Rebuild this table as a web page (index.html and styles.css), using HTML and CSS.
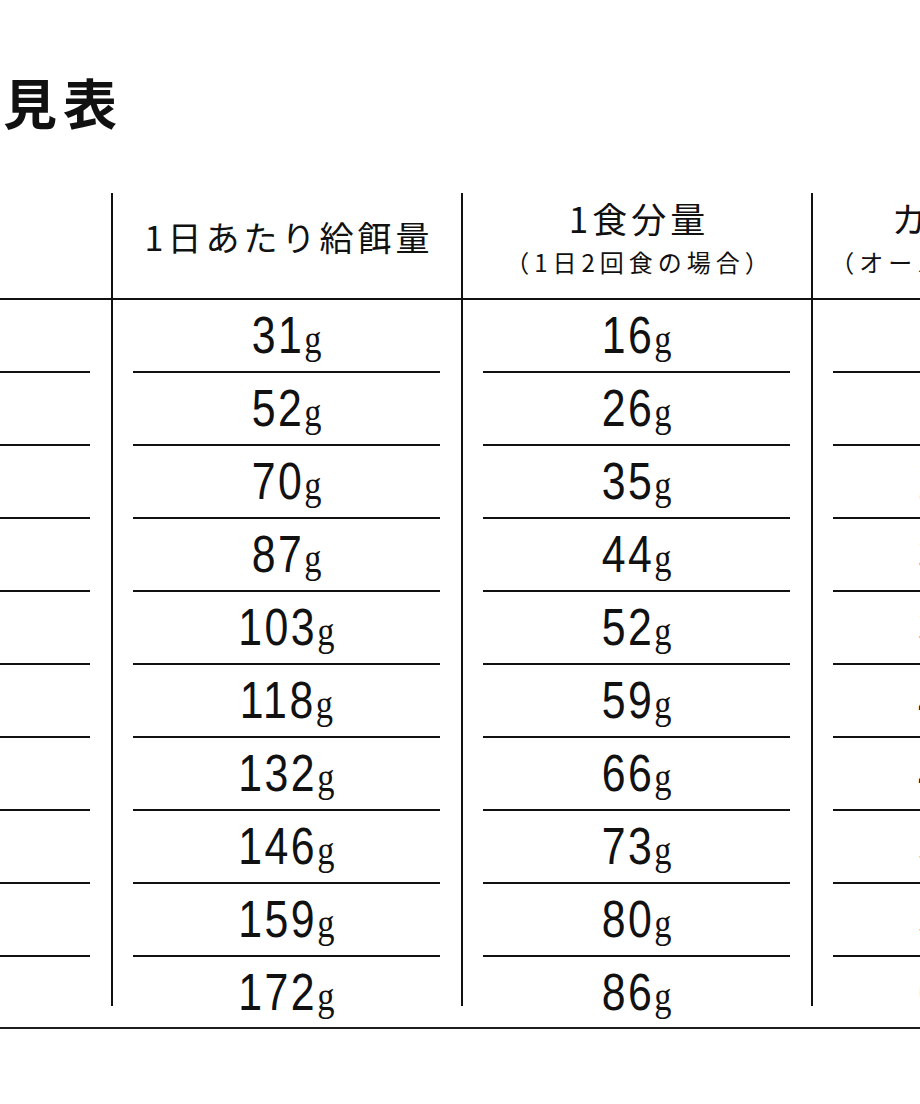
FILE: index.html
```html
<!DOCTYPE html>
<html lang="ja">
<head>
<meta charset="utf-8">
<title>給餌量早見表</title>
<link rel="stylesheet" href="styles.css">
</head>
<body>
<div class="page">
  <h1 class="title">見表</h1>
  <div class="chart">
    <div class="head">
      <div class="hcell"><span class="h-main h-lg">体重</span></div>
      <div class="hcell"><span class="h-main">1日あたり給餌量</span></div>
      <div class="hcell"><span class="h-main h-lg">1食分量</span><span class="h-sub">（1日2回食の場合）</span></div>
      <div class="hcell"><span class="h-main h-lg">カロリー量</span><span class="h-sub">（オールステージ共通）</span></div>
    </div>
    <div class="body">
      <div class="col">
        <div class="cell"><span class="v">1<span class="u">kg</span></span></div>
        <div class="cell"><span class="v">2<span class="u">kg</span></span></div>
        <div class="cell"><span class="v">3<span class="u">kg</span></span></div>
        <div class="cell"><span class="v">4<span class="u">kg</span></span></div>
        <div class="cell"><span class="v">5<span class="u">kg</span></span></div>
        <div class="cell"><span class="v">6<span class="u">kg</span></span></div>
        <div class="cell"><span class="v">7<span class="u">kg</span></span></div>
        <div class="cell"><span class="v">8<span class="u">kg</span></span></div>
        <div class="cell"><span class="v">9<span class="u">kg</span></span></div>
        <div class="cell"><span class="v">10<span class="u">kg</span></span></div>
      </div>
      <div class="col">
        <div class="cell"><span class="v">31<span class="u">g</span></span></div>
        <div class="cell"><span class="v">52<span class="u">g</span></span></div>
        <div class="cell"><span class="v">70<span class="u">g</span></span></div>
        <div class="cell"><span class="v">87<span class="u">g</span></span></div>
        <div class="cell"><span class="v">103<span class="u">g</span></span></div>
        <div class="cell"><span class="v">118<span class="u">g</span></span></div>
        <div class="cell"><span class="v">132<span class="u">g</span></span></div>
        <div class="cell"><span class="v">146<span class="u">g</span></span></div>
        <div class="cell"><span class="v">159<span class="u">g</span></span></div>
        <div class="cell"><span class="v">172<span class="u">g</span></span></div>
      </div>
      <div class="col">
        <div class="cell"><span class="v">16<span class="u">g</span></span></div>
        <div class="cell"><span class="v">26<span class="u">g</span></span></div>
        <div class="cell"><span class="v">35<span class="u">g</span></span></div>
        <div class="cell"><span class="v">44<span class="u">g</span></span></div>
        <div class="cell"><span class="v">52<span class="u">g</span></span></div>
        <div class="cell"><span class="v">59<span class="u">g</span></span></div>
        <div class="cell"><span class="v">66<span class="u">g</span></span></div>
        <div class="cell"><span class="v">73<span class="u">g</span></span></div>
        <div class="cell"><span class="v">80<span class="u">g</span></span></div>
        <div class="cell"><span class="v">86<span class="u">g</span></span></div>
      </div>
      <div class="col">
        <div class="cell"><span class="v">11<span class="u">kcal</span></span></div>
        <div class="cell"><span class="v">18<span class="u">kcal</span></span></div>
        <div class="cell"><span class="v">252<span class="u">kcal</span></span></div>
        <div class="cell"><span class="v">313<span class="u">kcal</span></span></div>
        <div class="cell"><span class="v">371<span class="u">kcal</span></span></div>
        <div class="cell"><span class="v">425<span class="u">kcal</span></span></div>
        <div class="cell"><span class="v">475<span class="u">kcal</span></span></div>
        <div class="cell"><span class="v">526<span class="u">kcal</span></span></div>
        <div class="cell"><span class="v">572<span class="u">kcal</span></span></div>
        <div class="cell"><span class="v">619<span class="u">kcal</span></span></div>
      </div>
    </div>
    <div class="rule"></div>
  </div>
</div>
</body>
</html>
```

FILE: styles.css
```css
* {
  box-sizing: border-box;
}

html,
body {
  margin: 0;
  padding: 0;
  background: #ffffff;
}

body {
  width: 920px;
  height: 1104px;
  overflow: hidden;
  font-family: "Noto Sans CJK JP", "Noto Sans", sans-serif;
  color: #111111;
}

.page {
  width: 920px;
  height: 1104px;
  overflow: hidden;
  padding-top: 75px;
}

.title {
  margin: 0 0 0 3px;
  font-size: 54px;
  line-height: 54px;
  font-weight: 700;
  letter-spacing: 6px;
  white-space: nowrap;
}

.chart {
  width: 1400px;
  margin-top: 64px;
  margin-left: -239px;
}

.head {
  display: grid;
  grid-template-columns: repeat(4, 350px);
  height: 107px;
  border-bottom: 2px solid #111111;
}

.hcell {
  display: flex;
  flex-direction: column;
  align-items: center;
  justify-content: center;
  gap: 15px;
  padding-bottom: 18px;
  white-space: nowrap;
}

.hcell + .hcell {
  border-left: 2px solid #111111;
}

.h-main {
  font-size: 34px;
  line-height: 34px;
  letter-spacing: 4px;
  padding-left: 4px;
}

.h-lg {
  font-size: 35px;
  line-height: 35px;
  letter-spacing: 4px;
  padding-left: 4px;
}

.h-sub {
  font-size: 24px;
  line-height: 24px;
  letter-spacing: 5px;
  padding-left: 5px;
}

.body {
  display: grid;
  grid-template-columns: repeat(4, 350px);
  height: 706px;
}

.col {
  height: 706px;
}

.col + .col {
  border-left: 2px solid #111111;
}

.cell {
  height: 73px;
  margin: 0 21px 0 20px;
  border-bottom: 2px solid #111111;
  font-family: "Liberation Sans", "Arial", sans-serif;
  font-size: 51px;
  line-height: 71px;
  text-align: center;
  white-space: nowrap;
}

.cell:last-child {
  border-bottom: none;
}

.v {
  display: inline-block;
  letter-spacing: 3px;
  transform: scaleX(0.84);
}

.u {
  font-family: "Liberation Serif", serif;
  font-size: 41px;
  line-height: 1;
  letter-spacing: 0;
}

.rule {
  margin-top: 21px;
  height: 2px;
  background: #1d1d1d;
}
```
